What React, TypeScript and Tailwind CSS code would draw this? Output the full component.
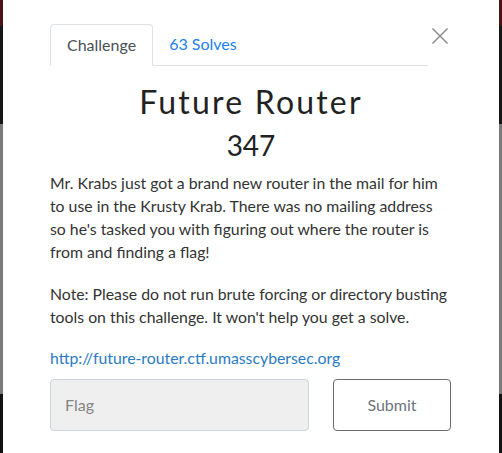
import React from 'react';

const lato = { fontFamily: 'Lato, "Open Sans", sans-serif' };

function EdgeStrip() {
    return (
        <div className="flex w-[3px] flex-col">
            <div className="h-[26px] bg-[#4a1414]"></div>
            <div className="h-[98px] bg-[#161616]"></div>
            <div className="h-[270px] bg-[#7a7a7a]"></div>
            <div className="flex-1 bg-[#121212]"></div>
        </div>
    );
}

export default function App() {
    return (
        <div className="flex h-[453px] w-[502px] overflow-hidden bg-black" style={lato}>
            <EdgeStrip />

            {/* Challenge modal */}
            <div className="flex-1 bg-white px-[47px] pt-[24px] text-[#333]">
                <div className="flex items-start">
                    <div className="flex flex-1 border-b border-[#dee2e6] text-[16px] leading-[24px]">
                        <div className="-mb-px rounded-t-[4px] border border-[#dee2e6] border-b-white bg-white px-4 py-2 text-[#495057]">
                            Challenge
                        </div>
                        <div className="px-4 py-2 text-[#1e7ff5]">63 Solves</div>
                    </div>
                    <button className="mt-[4px] flex w-[24px] justify-center text-[#8a8a8a]">
                        <svg width="16" height="16" viewBox="0 0 16 16" stroke="currentColor" strokeWidth="1.4">
                            <line x1="0.5" y1="0.5" x2="15.5" y2="15.5" />
                            <line x1="15.5" y1="0.5" x2="0.5" y2="15.5" />
                        </svg>
                    </button>
                </div>

                <h2 className="mt-[14px] text-center text-[32px] font-normal leading-[44px] tracking-[2.2px] text-[#222]">
                    Future Router
                </h2>
                <h3 className="mt-[4px] text-center text-[28px] leading-[34px] text-[#222]">347</h3>

                <div className="mt-[9px] text-[15.8px] leading-[23px]">
                    <p className="mb-[19px]">
                        Mr. Krabs just got a brand new router in the mail for him to use in the Krusty Krab. There was
                        no mailing address so he's tasked you with figuring out where the router is from and finding a
                        flag!
                    </p>
                    <p className="mb-[18px]">
                        Note: Please do not run brute forcing or directory busting tools on this challenge. It won't
                        help you get a solve.
                    </p>
                    <a className="text-[#2a7bc4]">http://future-router.ctf.umasscybersec.org</a>
                </div>

                <div className="mt-[10px] flex gap-[24px]">
                    <div className="flex h-[52px] w-[259px] items-center rounded-[4px] border border-[#ced4da] bg-[#efefef] px-[14px] text-[16px] text-[#868686]">
                        Flag
                    </div>
                    <button className="h-[52px] w-[118px] rounded-[4px] border border-[#6c6c6c] bg-white text-[16px] text-[#6c757d]">
                        Submit
                    </button>
                </div>
            </div>

            <EdgeStrip />
        </div>
    );
}
